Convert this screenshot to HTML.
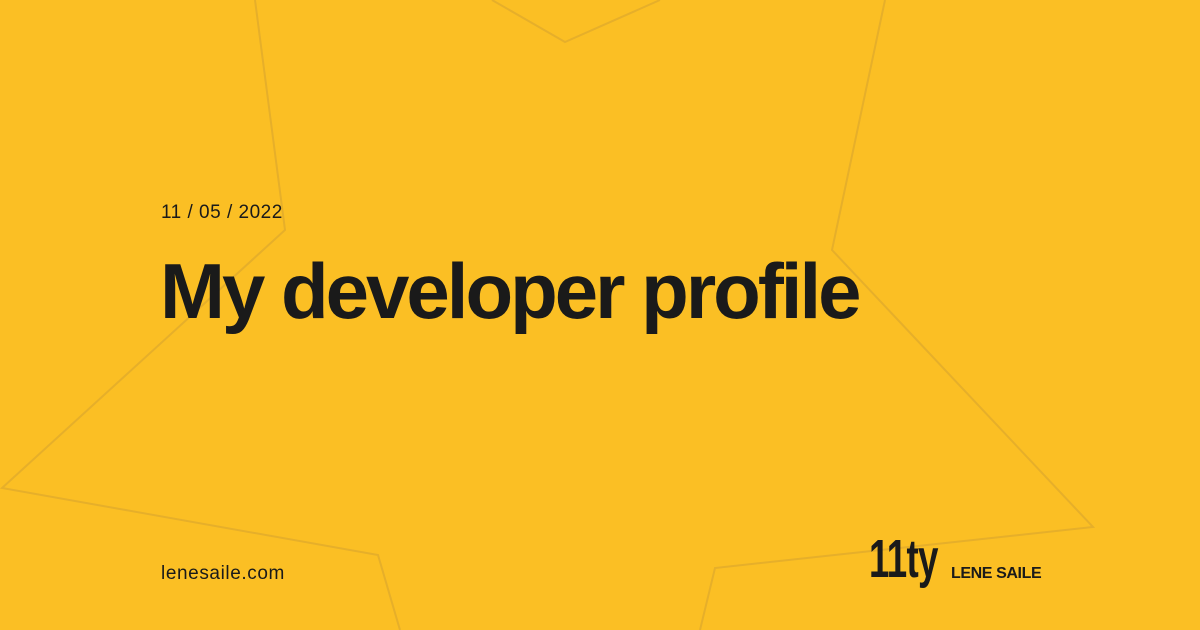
<!DOCTYPE html>
<html><head><style>
body{margin:0;width:1200px;height:630px;overflow:hidden;background:#fbbf24;font-family:"Liberation Sans",sans-serif;color:#1a1a1a;position:relative}
svg{position:absolute;left:0;top:0}
.d{position:absolute;left:161px;top:202px;font-size:19px;letter-spacing:0.5px}
h1{position:absolute;left:160px;top:246px;margin:0;font-size:78px;font-weight:bold;letter-spacing:-3px;white-space:nowrap}
.u{position:absolute;left:161px;top:563px;font-size:19px;letter-spacing:0.6px}
.l{position:absolute;left:869px;top:528px;font-size:54px;font-weight:bold;letter-spacing:-1px;transform:scaleX(0.68);transform-origin:left}
.n{position:absolute;left:951px;top:565px;font-size:16px;font-weight:bold;letter-spacing:-0.4px}
</style></head><body>
<svg width="1200" height="630"><g fill="none" stroke="#e6af2a" stroke-width="2">
<polyline points="255,0 285,230 2,488 378,555 400,630"/>
<polyline points="492,0 565,42 660,0"/>
<polyline points="885,0 832,250 1093,527 715,568 700,630"/>
</g></svg>
<div class="d">11 / 05 / 2022</div>
<h1>My developer profile</h1>
<div class="u">lenesaile.com</div>
<div class="l">11ty</div>
<div class="n">LENE SAILE</div>
</body></html>
